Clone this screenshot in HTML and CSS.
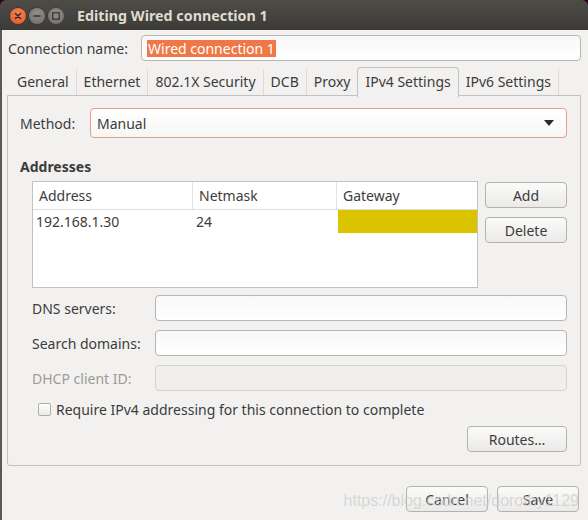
FILE: index.html
```html
<!DOCTYPE html>
<html>
<head>
<meta charset="utf-8">
<link rel="stylesheet" href="styles.css">
</head>
<body>
<div class="window">
  <div class="titlebar">
    <div class="wbtns">
      <span class="wbtn close"><svg width="16" height="16" viewBox="0 0 16 16"><path d="M5.5 5.5 L10.5 10.5 M10.5 5.5 L5.5 10.5" stroke="#3a2a22" stroke-width="1.6" stroke-linecap="round"/></svg></span>
      <span class="wbtn"><svg width="16" height="16" viewBox="0 0 16 16"><path d="M4.5 8 H11.5" stroke="#3a3935" stroke-width="1.6"/></svg></span>
      <span class="wbtn"><svg width="16" height="16" viewBox="0 0 16 16"><rect x="4.8" y="4.8" width="6.4" height="6.4" fill="none" stroke="#3a3935" stroke-width="1.3"/></svg></span>
    </div>
    <div class="title">Editing Wired connection 1</div>
  </div>
  <div class="content">
    <div class="namerow">
      <label class="namelabel">Connection name:</label>
      <div class="entry nameentry"><span class="sel">Wired connection 1</span></div>
    </div>
    <div class="tabs">
      <div class="tab">General</div>
      <div class="tab">Ethernet</div>
      <div class="tab">802.1X Security</div>
      <div class="tab">DCB</div>
      <div class="tab pre">Proxy</div>
      <div class="tab active">IPv4 Settings</div>
      <div class="tab">IPv6 Settings</div>
    </div>
    <div class="panel">
      <div class="methodrow">
        <label class="methodlabel">Method:</label>
        <div class="combo"><span>Manual</span><svg width="12" height="8" viewBox="0 0 12 8"><path d="M1 1 H11 L6 7 Z" fill="#2b2b2b"/></svg></div>
      </div>
      <div class="section">Addresses</div>
      <div class="addrrow">
        <div class="table">
          <div class="thead">
            <div class="th c1">Address</div>
            <div class="th c2">Netmask</div>
            <div class="th c3">Gateway</div>
          </div>
          <div class="trow">
            <div class="td c1">192.168.1.30</div>
            <div class="td c2">24</div>
            <div class="td c3 editing"></div>
          </div>
        </div>
        <div class="sidebtns">
          <div class="btn">Add</div>
          <div class="btn">Delete</div>
        </div>
      </div>
      <div class="form">
        <label class="flabel">DNS servers:</label>
        <div class="entry"></div>
        <label class="flabel">Search domains:</label>
        <div class="entry"></div>
        <label class="flabel disabled">DHCP client ID:</label>
        <div class="entry dis"></div>
      </div>
      <div class="checkrow">
        <span class="check"></span>
        <span>Require IPv4 addressing for this connection to complete</span>
      </div>
      <div class="routesrow">
        <div class="btn routes">Routes…</div>
      </div>
    </div>
    <div class="actions">
      <div class="btn">Cancel</div>
      <div class="btn">Save</div>
    </div>
    <div class="watermark">https://blog.csdn.net/dorothy1129</div>
  </div>
</div>
</body>
</html>
```

FILE: styles.css
```css
* { box-sizing: border-box; }
html, body { margin: 0; padding: 0; }
body {
  width: 588px;
  height: 520px;
  background: #2c001e;
  font-family: "Noto Sans", "DejaVu Sans", sans-serif;
  font-size: 14px;
  color: #3c3c3c;
  overflow: hidden;
}
.window {
  width: 588px;
  height: 520px;
  display: flex;
  flex-direction: column;
}
.titlebar {
  height: 30px;
  flex: none;
  background: linear-gradient(#4d4c47, #3c3b37);
  border-radius: 6px 6px 0 0;
  display: flex;
  align-items: center;
}
.wbtns {
  display: flex;
  gap: 3px;
  margin-left: 10px;
  margin-top: 1px;
}
.wbtn {
  width: 16px;
  height: 16px;
  border-radius: 50%;
  background: radial-gradient(circle at 50% 35%, #8f8e89, #6e6d69);
  border: none;
  box-shadow: 0 0 0 0.5px #2e2d2a;
  display: block;
}
.wbtn svg { display: block; }
.close {
  background: radial-gradient(circle at 50% 35%, #f4855a, #e0551f);
}
.title {
  margin-left: 13px;
  font-weight: bold;
  font-size: 14.3px;
  color: #dfdbd2;
}
.content {
  position: relative;
  flex: 1;
  background: #f2f1f0;
  border-left: 2px solid #5a5956;
  padding: 5px 7px 0 5px;
  display: flex;
  flex-direction: column;
}
.namerow {
  display: flex;
  align-items: center;
  height: 26px;
}
.namelabel {
  width: 134px;
  padding-left: 1px;
}
.entry {
  height: 26px;
  border: 1px solid #b7b6b3;
  border-radius: 4px;
  background: linear-gradient(#f8f8f8, #ffffff);
}
.nameentry {
  flex: 1;
  display: flex;
  align-items: center;
  padding-left: 5px;
}
.sel {
  background: #f07746;
  color: #ffffff;
  line-height: 17px;
  padding: 0 1px;
}
.tabs {
  display: flex;
  margin-top: 6px;
  height: 29px;
  padding-left: 3px;
  align-items: flex-end;
}
.tab {
  height: 27px;
  padding: 0 7px 2px 7px;
  display: flex;
  align-items: center;
  border-right: 1px solid #dcdbd8;
}
.tab.pre { border-right: none; }
.tab.active {
  height: 30px;
  margin-bottom: -1px;
  border: 1px solid #c3c2bf;
  border-bottom: none;
  border-radius: 4px 4px 0 0;
  background: #f2f1f0;
  position: relative;
  z-index: 1;
  padding: 0 7px 3px 7px;
}
.panel {
  border: 1px solid #c3c2bf;
  border-radius: 0 0 3px 3px;
  height: 371px;
  padding: 12px 13px 0 12px;
  display: flex;
  flex-direction: column;
  margin-top: -1px;
}
.methodrow {
  display: flex;
  align-items: center;
  height: 30px;
}
.methodlabel {
  width: 70px;
}
.combo {
  flex: 1;
  height: 30px;
  border: 1px solid #e0a183;
  border-radius: 4px;
  background: linear-gradient(#ffffff, #f6f6f5);
  display: flex;
  align-items: center;
  justify-content: space-between;
  padding: 0 11px 0 6px;
}
.combo svg { display: block; }
.section {
  font-weight: bold;
  margin-top: 20px;
  height: 18px;
  line-height: 18px;
}
.addrrow {
  display: flex;
  margin-top: 5px;
  padding-left: 12px;
  gap: 7px;
}
.table {
  width: 446px;
  height: 107px;
  border: 1px solid #c3c2bf;
  background: #ffffff;
}
.thead, .trow {
  display: flex;
}
.thead {
  height: 28px;
  border-bottom: 1px solid #dedddb;
}
.trow { height: 23px; }
.c1 { width: 160px; }
.c2 { width: 144px; }
.c3 { flex: 1; }
.th {
  display: flex;
  align-items: center;
  padding-left: 6px;
}
.th.c1, .th.c2 { border-right: 1px solid #e4e3e1; }
.td {
  display: flex;
  align-items: center;
  padding-left: 3px;
}
.td.c3 { margin-left: 1px; }
.editing { background: #dcc300; }
.sidebtns {
  display: flex;
  flex-direction: column;
  gap: 9px;
  padding-top: 1px;
}
.btn {
  width: 82px;
  height: 26px;
  border: 1px solid #b3b2af;
  border-radius: 4px;
  background: linear-gradient(#fbfbfa, #ebeae8);
  display: flex;
  align-items: center;
  justify-content: center;
}
.form {
  display: grid;
  grid-template-columns: 123px 1fr;
  row-gap: 9px;
  margin-top: 7px;
  padding-left: 12px;
  align-items: center;
}
.disabled { color: #9c9b98; }
.entry.dis {
  border-color: #d4d3d0;
  background: #f0efed;
}
.checkrow {
  display: flex;
  align-items: center;
  margin-top: 8px;
  height: 20px;
  padding-left: 18px;
  gap: 5px;
}
.check {
  width: 13px;
  height: 13px;
  border: 1px solid #aeadaa;
  border-radius: 2px;
  background: linear-gradient(#ffffff, #ecebe9);
}
.routesrow {
  display: flex;
  justify-content: flex-end;
  margin-top: 7px;
}
.btn.routes { width: 100px; }
.actions {
  display: flex;
  justify-content: flex-end;
  gap: 9px;
  margin-top: 20px;
  margin-right: 2px;
}
.watermark {
  position: absolute;
  right: 9px;
  bottom: 10px;
  font-family: "Liberation Sans", sans-serif;
  font-size: 16px;
  color: rgba(205, 205, 205, 0.75);
  pointer-events: none;
}
```
